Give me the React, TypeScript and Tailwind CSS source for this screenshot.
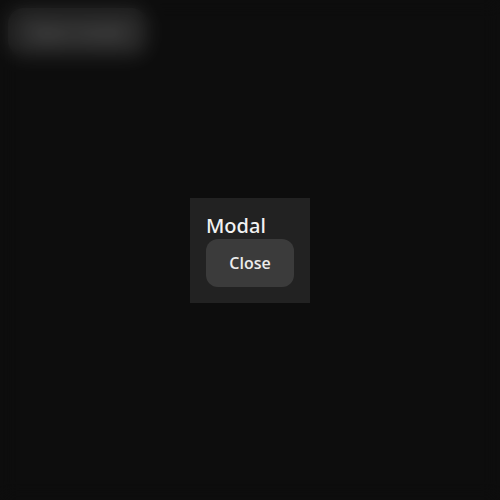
import React, { useState } from 'react';

export default function App() {
  const [open, setOpen] = useState(true);

  return (
    <div className="min-h-screen w-full bg-[#131313] p-2 font-['Open_Sans',sans-serif]">
      <button
        onClick={() => setOpen(true)}
        className="h-12 px-[22px] rounded-2xl bg-[#3b3b3b] text-[#8a8a8a] text-base font-semibold"
      >
        Open modal
      </button>

      {open && (
        <div className="fixed inset-0 flex items-center justify-center bg-black/30 backdrop-blur-[9px]">
          <div className="bg-[#222222] p-4 flex flex-col items-start">
            <h2 className="text-[20px] leading-[23px] text-[#f2f2f2] font-['Noto_Sans',sans-serif] font-medium mb-[2px]">
              Modal
            </h2>
            <button
              onClick={() => setOpen(false)}
              className="h-12 w-[88px] rounded-xl bg-[#3b3b3b] text-[#ececec] text-base font-semibold"
            >
              Close
            </button>
          </div>
        </div>
      )}
    </div>
  );
}
